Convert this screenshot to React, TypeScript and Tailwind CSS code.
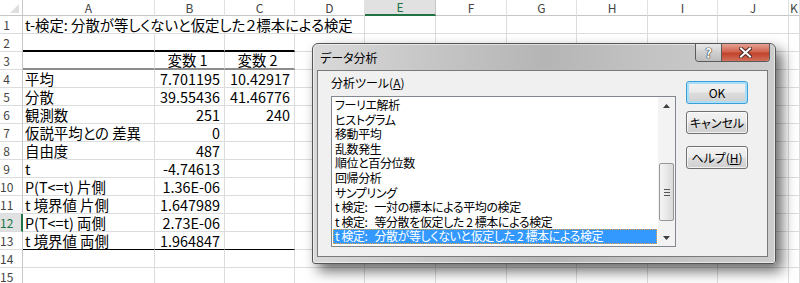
import React from "react";

const jp = "font-['Noto_Sans_CJK_JP',sans-serif] [font-feature-settings:'palt']";
const colGrid =
  "grid grid-cols-[23px_132px_70px_70px_70px_71px_71px_70px_71px_70px_71px_1fr]";
const letters = ["A", "B", "C", "D", "E", "F", "G", "H", "I", "J", "K"];
const grid = "border-r border-r-[#dadcdd]";

type Cells = { a?: string; b?: string; c?: string };
const data: Record<number, Cells> = {
  3: { b: "変数 1", c: "変数 2" },
  4: { a: "平均", b: "7.701195", c: "10.42917" },
  5: { a: "分散", b: "39.55436", c: "41.46776" },
  6: { a: "観測数", b: "251", c: "240" },
  7: { a: "仮説平均との 差異", b: "0" },
  8: { a: "自由度", b: "487" },
  9: { a: "t", b: "-4.74613" },
  10: { a: "P(T<=t) 片側", b: "1.36E-06" },
  11: { a: "t 境界値 片側", b: "1.647989" },
  12: { a: "P(T<=t) 両側", b: "2.73E-06" },
  13: { a: "t 境界値 両側", b: "1.964847" },
};

// bottom edge of the result table (A-C)
const tableEdge: Record<number, string> = {
  2: "border-b-2 border-b-black",
  3: "border-b-2 border-b-[#8c8c8c]",
  13: "border-b border-b-black",
};

const tools = [
  "フーリエ解析",
  "ヒストグラム",
  "移動平均",
  "乱数発生",
  "順位と百分位数",
  "回帰分析",
  "サンプリング",
  "t 検定:   一対の標本による平均の検定",
  "t 検定:   等分散を仮定した 2 標本による検定",
  "t 検定:   分散が等しくないと仮定した 2 標本による検定",
];

const RowHeader = ({ n }: { n: number }) => {
  const active = n === 12;
  return (
    <div
      className={`flex items-center border-b border-b-[#dadcdd] text-[12px] leading-none ${
        active
          ? "bg-[#e1e1e1] text-[#217346] border-r-2 border-r-[#217346]"
          : "text-[#444] border-r border-r-[#c6c6c6]"
      }`}
    >
      <span className="w-[13px] text-center">{n}</span>
    </div>
  );
};

const SheetRow = ({ n }: { n: number }) => {
  const d = data[n] || {};
  const edge = tableEdge[n] || "border-b border-b-[#dadcdd]";
  return (
    <div className={`${colGrid} h-[18px]`}>
      <RowHeader n={n} />
      <div className={`${grid} ${edge} flex items-center pl-[2px] whitespace-nowrap`}>{d.a}</div>
      <div
        className={`${grid} ${edge} flex items-center pr-[4px] ${
          n === 3 ? "justify-center" : "justify-end"
        }`}
      >
        {d.b}
      </div>
      <div
        className={`${grid} ${edge} flex items-center pr-[4px] ${
          n === 3 ? "justify-center" : "justify-end"
        }`}
      >
        {d.c}
      </div>
      {letters.slice(3).map((l) => (
        <div key={l} className={`${grid} border-b border-b-[#dadcdd]`} />
      ))}
    </div>
  );
};

const Sheet = () => (
  <div className={`${jp} text-[14.4px] leading-[16px] text-black`}>
    <div className={`${colGrid} h-[16px]`}>
      <div className="relative border-r border-b border-[#c6c6c6]">
        <div className="absolute right-[3px] bottom-[2px] w-0 h-0 border-l-[9px] border-l-transparent border-b-[9px] border-b-[#dfdfdf]" />
      </div>
      {letters.map((l) => (
        <div
          key={l}
          className={`flex items-center justify-center text-[12px] leading-none ${
            l === "E"
              ? "bg-[#e1e1e1] text-[#217346] border-b-2 border-b-[#217346] border-r border-r-[#c6c6c6]"
              : "text-[#444] border-b border-b-[#c6c6c6] border-r border-r-[#e1e1e1]"
          }`}
        >
          {l}
        </div>
      ))}
    </div>
    <div className={`${colGrid} h-[18px]`}>
      <RowHeader n={1} />
      <div className={`col-span-4 ${grid} border-b border-b-[#dadcdd] flex items-center pl-[2px] whitespace-nowrap`}>
        t-検定: 分散が等しくないと仮定した２標本による検定
      </div>
      {letters.slice(4).map((l) => (
        <div key={l} className={`${grid} border-b border-b-[#dadcdd]`} />
      ))}
    </div>
    {Array.from({ length: 14 }, (_, i) => (
      <SheetRow key={i} n={i + 2} />
    ))}
  </div>
);

const btn =
  "h-[23px] w-[62px] rounded-[3px] flex items-center justify-center text-[12px] leading-none text-black bg-[linear-gradient(180deg,#f2f2f2_0%,#ebebeb_48%,#dddddd_52%,#cfcfcf_100%)]";

const Dialog = () => (
  <div
    className={`${jp} absolute left-[312px] top-[43px] w-[464px] h-[221px] flex flex-col rounded-t-[6px] rounded-b-[3px] border border-[#555] bg-[linear-gradient(90deg,#d9d9d9_0%,#c6c6c6_25%,#b5b5b5_50%,#c4c4c4_75%,#cdcdcd_100%)] shadow-[inset_0_0_0_1px_rgba(255,255,255,0.55),6px_7px_14px_rgba(0,0,0,0.6)]`}
  >
    <div className="relative h-[26px] pl-[7px] pt-[6px] text-[12px] leading-[16px] text-black">
      データ分析
      <div className="absolute right-[5px] top-0 flex h-[18px] overflow-hidden rounded-b-[4px] border border-t-0 border-[#5b5b5b]">
        <div className="w-[26px] flex items-center justify-center border-r border-r-[#5b5b5b] bg-[linear-gradient(180deg,#e8e8e8_0%,#cfcfcf_50%,#bdbdbd_100%)] text-[13px] leading-none font-bold text-white [text-shadow:0_0_1px_#333,0_0_1px_#333,0_0_1px_#333]">
          ?
        </div>
        <div className="w-[47px] flex items-center justify-center bg-[linear-gradient(180deg,#e6a192_0%,#d0644f_45%,#c2432c_55%,#d0705a_100%)]">
          <svg width="13" height="11" viewBox="0 0 13 11">
            <path d="M2 1.5 L11 9.5 M11 1.5 L2 9.5" stroke="#4a2a25" strokeWidth="4" strokeLinecap="square" />
            <path d="M2 1.5 L11 9.5 M11 1.5 L2 9.5" stroke="#fff" strokeWidth="2" strokeLinecap="square" />
          </svg>
        </div>
      </div>
    </div>
    <div className="ml-[4px] mr-[7px] mb-[6px] flex-1 flex border border-[#7a7a7a] bg-[#f0f0f0] text-[12px]">
      <div className="pl-[13px] pt-[4px]">
        <div className="h-[16px] leading-[16px]">
          分析ツール(<span className="underline">A</span>)
        </div>
        <div className="mt-[5px] w-[345px] h-[151px] flex border border-[#828790] bg-white">
          <div className="flex-1 pt-[1px] pl-[1px] pr-[1px] tracking-[-0.4px]">
            {tools.map((t, i) =>
              i === tools.length - 1 ? (
                <div
                  key={t}
                  className="h-[14.6px] leading-[12.6px] pl-[1px] whitespace-pre bg-[#3399ff] text-white border border-dotted border-[#f0a040]"
                >
                  {t}
                </div>
              ) : (
                <div key={t} className="h-[14.6px] leading-[14.6px] pl-[2px] whitespace-pre">
                  {t}
                </div>
              )
            )}
          </div>
          <div className="w-[17px] flex flex-col bg-[#f3f3f3]">
            <div className="h-[17px] flex items-center justify-center">
              <svg width="7" height="4" viewBox="0 0 7 4">
                <path d="M0 4 L3.5 0 L7 4 Z" fill="#404040" />
              </svg>
            </div>
            <div className="flex-1 px-[1px] pt-[49px]">
              <div className="h-[58px] rounded-[2px] border border-[#979797] bg-[linear-gradient(90deg,#f4f4f4_0%,#e9e9e9_50%,#d9d9d9_100%)] flex flex-col items-center justify-center gap-[2px]">
                <div className="w-[6px] h-px bg-[#555]" />
                <div className="w-[6px] h-px bg-[#555]" />
                <div className="w-[6px] h-px bg-[#555]" />
              </div>
            </div>
            <div className="h-[17px] flex items-center justify-center">
              <svg width="7" height="4" viewBox="0 0 7 4">
                <path d="M0 0 L3.5 4 L7 0 Z" fill="#404040" />
              </svg>
            </div>
          </div>
        </div>
      </div>
      <div className="ml-[10px] pt-[10px] flex flex-col">
        <div className={`${btn} border border-[#3c9fd8] shadow-[inset_0_0_0_2px_#a9def8]`}>OK</div>
        <div className={`${btn} mt-[7px] border border-[#707070] shadow-[inset_0_0_0_1px_rgba(255,255,255,0.7)]`}>
          キャンセル
        </div>
        <div className={`${btn} mt-[12px] border border-[#707070] shadow-[inset_0_0_0_1px_rgba(255,255,255,0.7)]`}>
          ヘルプ(<span className="underline">H</span>)
        </div>
      </div>
    </div>
  </div>
);

export default function App() {
  return (
    <div className="relative w-[800px] h-[283px] overflow-hidden bg-white">
      <Sheet />
      <Dialog />
    </div>
  );
}
